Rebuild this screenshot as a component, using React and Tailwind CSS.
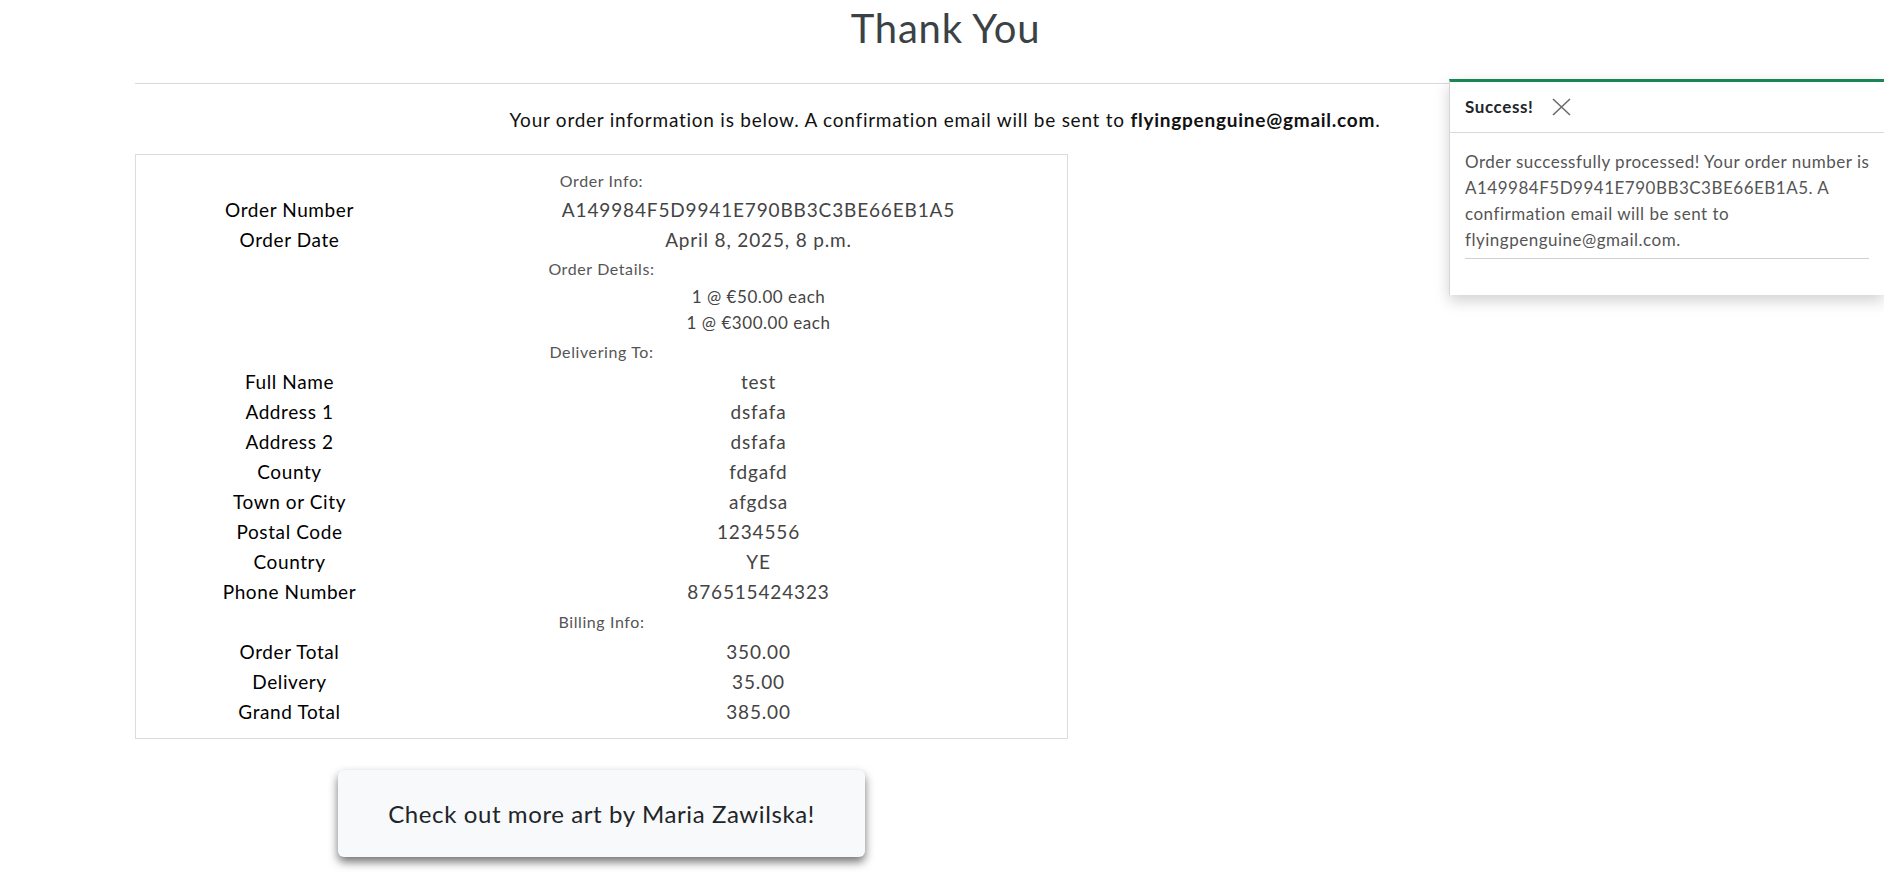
const orderInfo = [
  ["Order Number", "A149984F5D9941E790BB3C3BE66EB1A5"],
  ["Order Date", "April 8, 2025, 8 p.m."],
];

const delivering = [
  ["Full Name", "test"],
  ["Address 1", "dsfafa"],
  ["Address 2", "dsfafa"],
  ["County", "fdgafd"],
  ["Town or City", "afgdsa"],
  ["Postal Code", "1234556"],
  ["Country", "YE"],
  ["Phone Number", "876515424323"],
];

const billing = [
  ["Order Total", "350.00"],
  ["Delivery", "35.00"],
  ["Grand Total", "385.00"],
];

function Heading({ children, className = "h-[30px]" }) {
  return (
    <div className={`flex items-center justify-center text-[16px] tracking-[0.6px] text-[#555] ${className}`}>
      {children}
    </div>
  );
}

function Row({ label, value }) {
  return (
    <div className="grid h-[30px] grid-cols-[307px_1fr] items-center text-[19px]">
      <div className="text-center tracking-[0.6px] text-black">{label}</div>
      <div className="pl-[7px] text-center tracking-[0.85px] text-[#444]">{value}</div>
    </div>
  );
}

function DetailLine({ children, className }) {
  return (
    <div className={`grid grid-cols-[307px_1fr] items-center text-[17px] tracking-[0.55px] text-[#444] ${className}`}>
      <div />
      <div className="pl-[7px] text-center">{children}</div>
    </div>
  );
}

export default function App() {
  return (
    <div
      className="relative min-h-[886px] bg-white"
      style={{ fontFamily: "Lato, 'Noto Sans', sans-serif" }}
    >
      <div className="px-[135px]">
        <h1 className="ml-[7px] flex h-[56px] items-center justify-center text-[40px] tracking-[0.8px] text-[#3b4245]">
          Thank You
        </h1>
        <hr className="mt-[27px] border-t border-[#d9d9d9]" />
        <p className="ml-[6px] mt-[21px] flex h-[30px] items-center justify-center text-[19px] tracking-[0.75px] text-[#111]">
          Your order information is below. A confirmation email will be sent to&nbsp;
          <strong className="font-bold">flyingpenguine@gmail.com</strong>.
        </p>

        <div className="mt-[19px] w-[933px] border border-[#dcdcdc] pb-[11px] pt-[12px]">
          <Heading className="h-[28px]">Order Info:</Heading>
          {orderInfo.map(([l, v]) => (
            <Row key={l} label={l} value={v} />
          ))}
          <Heading className="h-[28px]">Order Details:</Heading>
          <DetailLine className="h-[27px]">1 @ €50.00 each</DetailLine>
          <DetailLine className="h-[26px]">1 @ €300.00 each</DetailLine>
          <Heading className="h-[31px]">Delivering To:</Heading>
          {delivering.map(([l, v]) => (
            <Row key={l} label={l} value={v} />
          ))}
          <Heading>Billing Info:</Heading>
          {billing.map(([l, v]) => (
            <Row key={l} label={l} value={v} />
          ))}
        </div>

        <div className="flex w-[933px] justify-center pt-[31px]">
          <button className="flex h-[87px] w-[527px] items-center justify-center rounded-[6px] bg-[#f8f9fa] text-[24px] tracking-[0.6px] text-[#212529] shadow-[0_5px_10px_rgba(0,0,0,0.55)]">
            Check out more art by Maria Zawilska!
          </button>
        </div>
      </div>

      {/* toast */}
      <div className="absolute left-[1449px] right-0 top-[79px] border-l border-t-[3px] border-l-[#d6d6d6] border-t-[#198754] bg-white shadow-[0_6px_14px_rgba(0,0,0,0.18)]">
        <div className="flex h-[51px] items-center gap-[19px] border-b border-[#d9d9d9] pl-[15px]">
          <span className="text-[17px] font-bold tracking-[0.6px] text-[#212529]">Success!</span>
          <svg width="19" height="18" viewBox="0 0 19 18" className="text-[#6c6c6c]">
            <path d="M1 1L18 17M18 1L1 17" stroke="currentColor" strokeWidth="1.6" fill="none" />
          </svg>
        </div>
        <div className="px-[15px] pb-[36px] pt-[16px] text-[17px] leading-[26px] tracking-[0.5px] text-[#555]">
          <div className="whitespace-nowrap">Order successfully processed! Your order number is</div>
          <div className="whitespace-nowrap">A149984F5D9941E790BB3C3BE66EB1A5. A</div>
          <div className="whitespace-nowrap">confirmation email will be sent to</div>
          <div className="whitespace-nowrap">flyingpenguine@gmail.com.</div>
          <hr className="mt-[5px] border-t border-[#d0d0d0]" />
        </div>
      </div>
    </div>
  );
}
